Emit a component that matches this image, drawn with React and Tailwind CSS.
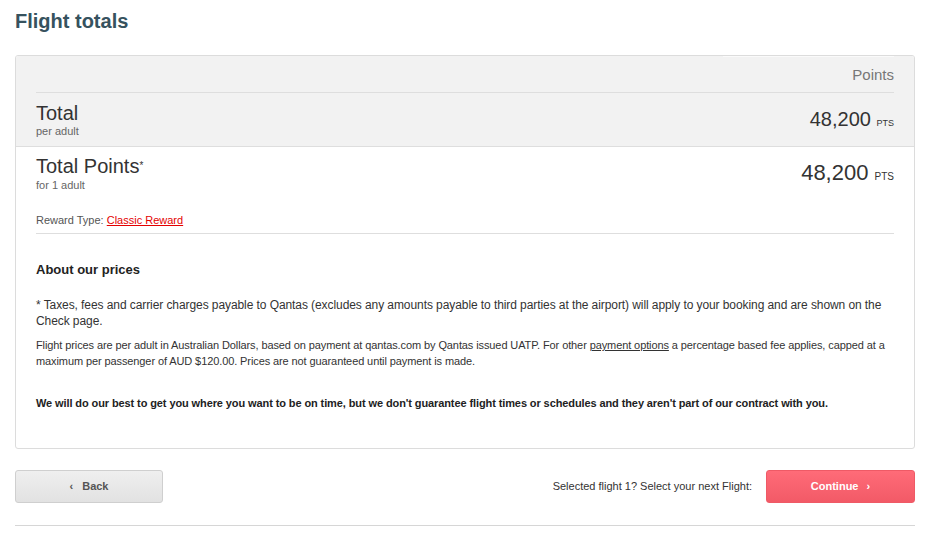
const App = () => {
  return (
    <div className="h-[536px] overflow-hidden bg-white pl-[15px] pt-[9px] font-['Liberation_Sans',Arial,sans-serif] text-[#333]">
      <div className="w-[900px]">
        <h1 className="text-[20px] font-bold leading-[24px] text-[#36525e]">
          Flight totals
        </h1>

        {/* Totals card */}
        <div className="mt-[22px] overflow-hidden rounded-[3px] border border-[#dcdcdc]">
          <div className="bg-[#f2f2f2] px-[20px]">
            <div className="flex justify-end border-b border-[#dedede]">
              <div className="w-[171px] border-t border-[#fafafa] pt-[8px] pb-[7px] text-right text-[15px] leading-[20px] text-[#777]">
                Points
              </div>
            </div>
            <div className="flex items-start justify-between pt-[9px] pb-[8px]">
              <div>
                <div className="text-[20px] leading-[22px] text-[#333]">Total</div>
                <div className="text-[11px] leading-[14px] text-[#666]">per adult</div>
              </div>
              <div className="pt-[5px] text-[20px] leading-[24px] text-[#333]">
                48,200 <span className="text-[9px]">PTS</span>
              </div>
            </div>
          </div>

          <div className="border-t border-[#dedede] px-[20px]">
            <div className="flex items-start justify-between pt-[8px]">
              <div>
                <div className="text-[20px] leading-[22px] text-[#333]">
                  Total Points<span className="align-top text-[10px]">*</span>
                </div>
                <div className="text-[11px] leading-[16px] text-[#666]">for 1 adult</div>
              </div>
              <div className="pt-[5px] text-[22px] leading-[26px] text-[#333]">
                48,200 <span className="text-[10px]">PTS</span>
              </div>
            </div>
            <div className="border-b border-[#dedede] pt-[20px] pb-[6px] text-[11px] leading-[14px] text-[#555]">
              Reward Type:{" "}
              <a href="#" className="text-[#e40000] underline">
                Classic Reward
              </a>
            </div>

            <div className="pt-[28px] pb-[37px]">
              <h2 className="text-[13px] font-bold leading-[16px] text-[#222]">
                About our prices
              </h2>
              <p className="mt-[19px] text-[12px] leading-[16px] tracking-[-0.08px] text-[#333]">
                * Taxes, fees and carrier charges payable to Qantas (excludes any
                amounts payable to third parties at the airport) will apply to your
                booking and are shown on the Check page.
              </p>
              <p className="mt-[8px] text-[11px] leading-[16px] tracking-[-0.1px] text-[#333]">
                Flight prices are per adult in Australian Dollars, based on payment
                at qantas.com by Qantas issued UATP. For other{" "}
                <a href="#" className="underline">
                  payment options
                </a>{" "}
                a percentage based fee applies, capped at a maximum per passenger of
                AUD $120.00. Prices are not guaranteed until payment is made.
              </p>
              <p className="mt-[26px] text-[11px] font-bold leading-[16px] tracking-[-0.1px] text-[#222]">
                We will do our best to get you where you want to be on time, but we
                don't guarantee flight times or schedules and they aren't part of our
                contract with you.
              </p>
            </div>
          </div>
        </div>

        {/* Actions */}
        <div className="mt-[21px] flex items-center justify-between border-b border-[#d6d6d6] pb-[22px]">
          <button className="flex h-[33px] w-[148px] items-center justify-center gap-[9px] rounded-[3px] border border-[#cfcfcf] bg-gradient-to-b from-[#efefef] to-[#e2e2e2] text-[11px] font-bold text-[#555]">
            <span className="text-[11px]">‹</span>
            <span>Back</span>
          </button>
          <div className="flex items-center gap-[14px]">
            <span className="text-[11px] text-[#333]">
              Selected flight 1? Select your next Flight:
            </span>
            <button className="flex h-[33px] w-[149px] items-center justify-center gap-[8px] rounded-[3px] border border-[#ef5a66] bg-gradient-to-b from-[#ff6b78] to-[#f25a67] text-[11px] font-bold text-white">
              <span>Continue</span>
              <span className="text-[11px]">›</span>
            </button>
          </div>
        </div>
      </div>
    </div>
  );
};

export default App;
